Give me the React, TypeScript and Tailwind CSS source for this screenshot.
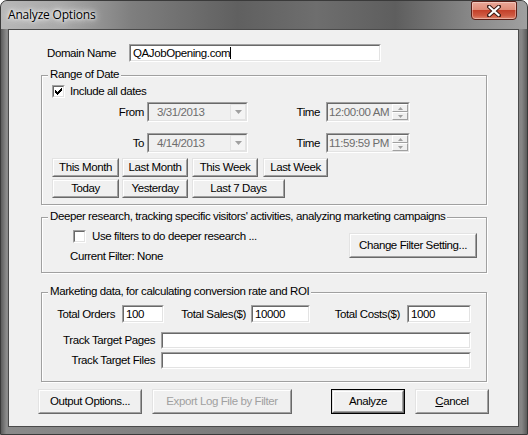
import React from "react";

const F = "font-['Liberation_Sans',Arial,sans-serif] text-[11.5px] tracking-[-0.4px] leading-[13px] text-black";

function Sunken({ className = "", disabled = false, children }: { className?: string; disabled?: boolean; children?: React.ReactNode }) {
  return (
    <div className={`border border-t-[#a0a0a0] border-l-[#a0a0a0] border-b-white border-r-white ${className}`}>
      <div className={`h-full w-full border border-t-[#696969] border-l-[#696969] border-b-[#e3e3e3] border-r-[#e3e3e3] flex items-center ${disabled ? "bg-[#f0f0f0]" : "bg-white"}`}>
        {children}
      </div>
    </div>
  );
}

function Btn({ className = "", disabled = false, isDefault = false, children }: { className?: string; disabled?: boolean; isDefault?: boolean; children?: React.ReactNode }) {
  const inner = (
    <div className="h-full w-full border border-t-[#e3e3e3] border-l-[#e3e3e3] border-b-[#696969] border-r-[#696969]">
      <div className={`h-full w-full border border-t-white border-l-white border-b-[#a0a0a0] border-r-[#a0a0a0] bg-[#f0f0f0] flex items-center justify-center ${disabled ? "text-[#a0a0a0]" : "text-black"}`}>
        {children}
      </div>
    </div>
  );
  if (isDefault) {
    return <div className={`border border-black ${className}`}>{inner}</div>;
  }
  return <div className={className}>{inner}</div>;
}

function Check({ checked }: { checked: boolean }) {
  return (
    <div className="w-[13px] h-[13px] border border-t-[#a0a0a0] border-l-[#a0a0a0] border-b-white border-r-white">
      <div className="w-full h-full border border-t-[#696969] border-l-[#696969] border-b-[#e3e3e3] border-r-[#e3e3e3] bg-white flex items-center justify-center">
        {checked && (
          <svg width="7" height="7" viewBox="0 0 7 7">
            <path d="M0 2h1v1h1v1h1v-1h1v-1h1v-1h1v-1h1v3h-1v1h-1v1h-1v1h-1v1h-1v-1h-1v-1h-1v-1h-1z" fill="#000" />
          </svg>
        )}
      </div>
    </div>
  );
}

function Combo({ value }: { value: string }) {
  return (
    <Sunken disabled className="w-[101px] h-[20px]">
      <span className="flex-1 pl-[8px] text-[#6d6d6d]">{value}</span>
      <div className="w-[16px] h-[16px] border border-[#e3e3e3] bg-[#f4f4f4] flex items-center justify-center mr-0">
        <svg width="7" height="4" viewBox="0 0 7 4">
          <path d="M0 0h7L3.5 4z" fill="#a0a0a0" />
        </svg>
      </div>
    </Sunken>
  );
}

function TimeBox({ value }: { value: string }) {
  return (
    <Sunken disabled className="w-[84px] h-[20px]">
      <span className="flex-1 pl-[1px] text-[#6d6d6d] whitespace-nowrap">{value}</span>
      <div className="w-[16px] h-full flex flex-col">
        <div className="flex-1 border border-t-white border-l-white border-b-[#a0a0a0] border-r-[#a0a0a0] bg-[#f0f0f0] flex items-center justify-center">
          <svg width="5" height="3" viewBox="0 0 5 3"><path d="M2.5 0L5 3H0z" fill="#a0a0a0" /></svg>
        </div>
        <div className="flex-1 border border-t-white border-l-white border-b-[#a0a0a0] border-r-[#a0a0a0] bg-[#f0f0f0] flex items-center justify-center">
          <svg width="5" height="3" viewBox="0 0 5 3"><path d="M0 0h5L2.5 3z" fill="#a0a0a0" /></svg>
        </div>
      </div>
    </Sunken>
  );
}

function Group({ label, className = "", children }: { label: string; className?: string; children?: React.ReactNode }) {
  return (
    <div className={`relative border border-[#a0a0a0] shadow-[inset_1px_1px_0_#fff,1px_1px_0_#fff] ${className}`}>
      <span className="absolute left-[6px] -top-[8px] px-[2px] bg-[#f0f0f0] whitespace-nowrap">{label}</span>
      {children}
    </div>
  );
}

export default function App() {
  return (
    <div className="w-[528px] h-[435px] bg-white">
      <div className={`w-[528px] h-[435px] rounded-t-[7px] border border-[#3a3a3a] bg-[linear-gradient(90deg,#5c5c5c_0%,#8a8a8a_1%,#7a7a7a_50%,#868686_99%,#5c5c5c_100%)] flex flex-col ${F}`}>
        {/* title bar */}
        <div className="h-[28px] flex items-start rounded-t-[6px] bg-[linear-gradient(90deg,#b8b8b8_0%,#a8a8a8_12%,#7e7e7e_25%,#606060_45%,#6e6e6e_60%,#5e5e5e_75%,#8a8a8a_90%,#a0a0a0_100%)]">
          <span className="ml-[7px] mt-[6px] font-['Open_Sans',sans-serif] text-[12px] tracking-[-0.2px] leading-[16px] text-black [text-shadow:0_0_6px_#fff,0_0_3px_#fff,0_0_10px_#fff]">
            Analyze Options
          </span>
          <div className="ml-auto mr-[10px] w-[46px] h-[19px] rounded-b-[4px] rounded-t-[2px] border border-[#5a1e16] bg-[linear-gradient(180deg,#eaa898_0%,#e08c78_45%,#c4412a_50%,#cf5a42_80%,#e08870_100%)] flex items-center justify-center shadow-[inset_0_0_0_1px_rgba(255,255,255,0.35)]">
            <svg width="14" height="12" viewBox="0 0 14 12">
              <path d="M2 1.5L12 10.5M12 1.5L2 10.5" stroke="#3a1a14" strokeWidth="4" strokeLinecap="square" />
              <path d="M2.5 2L11.5 10M11.5 2L2.5 10" stroke="#fff" strokeWidth="2.2" strokeLinecap="square" />
            </svg>
          </div>
        </div>

        {/* client */}
        <div className="ml-[7px] w-[511px] h-[398px] border border-[#4a4a4a] bg-[#f0f0f0] flex flex-col">
          {/* domain */}
          <div className="flex items-center mt-[14px] ml-[38px]">
            <span className="w-[82px]">Domain Name</span>
            <Sunken className="w-[252px] h-[18px]">
              <span className="pl-[2px] flex items-center">QAJobOpening.com<span className="inline-block w-[1px] h-[12px] bg-black" /></span>
            </Sunken>
          </div>

          {/* range of date */}
          <Group label="Range of Date" className="ml-[32px] mt-[13px] w-[446px] h-[130px]">
            <div className="flex flex-col">
              <div className="flex items-center mt-[9px] ml-[10px]">
                <Check checked />
                <span className="ml-[5px]">Include all dates</span>
              </div>
              <div className="flex items-center mt-[4px]">
                <span className="w-[102px] text-right">From</span>
                <div className="ml-[3px]"><Combo value="3/31/2013" /></div>
                <span className="w-[72px] text-right">Time</span>
                <div className="ml-[6px]"><TimeBox value="12:00:00 AM" /></div>
              </div>
              <div className="flex items-center mt-[11px]">
                <span className="w-[102px] text-right">To</span>
                <div className="ml-[3px]"><Combo value="4/14/2013" /></div>
                <span className="w-[72px] text-right">Time</span>
                <div className="ml-[6px]"><TimeBox value="11:59:59 PM" /></div>
              </div>
              <div className="flex mt-[5px] ml-[10px]">
                <Btn className="w-[67px] h-[19px]">This Month</Btn>
                <Btn className="ml-[3px] w-[66px] h-[19px]">Last Month</Btn>
                <Btn className="ml-[4px] w-[66px] h-[19px]">This Week</Btn>
                <Btn className="ml-[5px] w-[65px] h-[19px]">Last Week</Btn>
              </div>
              <div className="flex mt-[2px] ml-[10px]">
                <Btn className="w-[67px] h-[19px]">Today</Btn>
                <Btn className="ml-[3px] w-[66px] h-[19px]">Yesterday</Btn>
                <Btn className="ml-[4px] w-[93px] h-[19px]">Last 7 Days</Btn>
              </div>
            </div>
          </Group>

          {/* deeper research */}
          <Group label="Deeper research, tracking specific visitors' activities, analyzing marketing campaigns" className="ml-[32px] mt-[12px] w-[446px] h-[56px]">
            <div className="flex items-start">
              <div className="flex flex-col ml-[28px] mt-[12px]">
                <div className="flex items-center ml-[3px]">
                  <Check checked={false} />
                  <span className="ml-[6px]">Use filters to do deeper research ...</span>
                </div>
                <span className="mt-[7px]">Current Filter: None</span>
              </div>
              <Btn className="ml-auto mr-[9px] mt-[15px] w-[128px] h-[25px]">Change Filter Setting...</Btn>
            </div>
          </Group>

          {/* marketing */}
          <Group label="Marketing data, for calculating conversion rate and ROI" className="ml-[32px] mt-[19px] w-[446px] h-[90px]">
            <div className="flex flex-col">
              <div className="flex items-center mt-[12px]">
                <span className="w-[73px] text-right">Total Orders</span>
                <Sunken className="ml-[7px] w-[42px] h-[18px]"><span className="pl-[2px]">100</span></Sunken>
                <span className="w-[82px] text-right">Total Sales($)</span>
                <Sunken className="ml-[5px] w-[59px] h-[18px]"><span className="pl-[2px]">10000</span></Sunken>
                <span className="w-[90px] text-right">Total Costs($)</span>
                <Sunken className="ml-[7px] w-[64px] h-[18px]"><span className="pl-[2px]">1000</span></Sunken>
              </div>
              <div className="flex items-center mt-[9px]">
                <span className="w-[113px] text-right">Track Target Pages</span>
                <Sunken className="ml-[6px] w-[310px] h-[17px]" />
              </div>
              <div className="flex items-center mt-[3px]">
                <span className="w-[113px] text-right">Track Target Files</span>
                <Sunken className="ml-[6px] w-[310px] h-[17px]" />
              </div>
            </div>
          </Group>

          {/* bottom buttons */}
          <div className="flex mt-[7px] ml-[29px]">
            <Btn className="w-[104px] h-[25px]">Output Options...</Btn>
            <Btn disabled className="ml-[10px] w-[140px] h-[25px]">Export Log File by Filter</Btn>
            <Btn isDefault className="ml-[39px] w-[74px] h-[25px]">Analyze</Btn>
            <Btn className="ml-[10px] w-[74px] h-[25px]"><span><span className="underline">C</span>ancel</span></Btn>
          </div>
        </div>
      </div>
    </div>
  );
}
